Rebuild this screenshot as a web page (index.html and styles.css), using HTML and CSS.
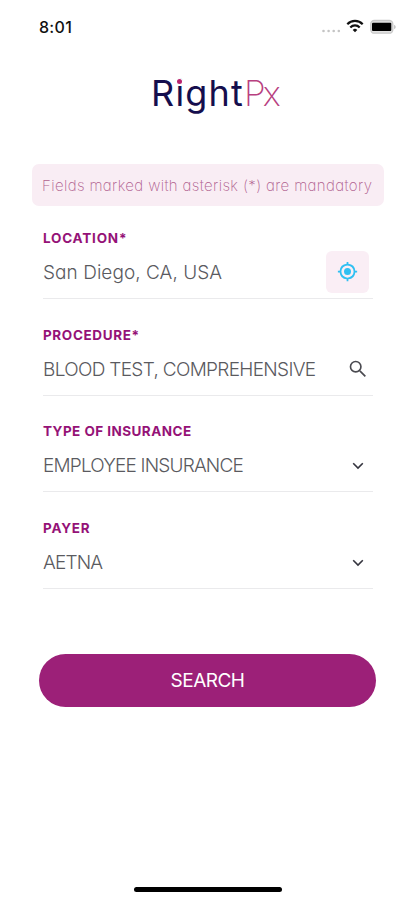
FILE: index.html
```html
<!DOCTYPE html>
<html lang="en">
<head>
<meta charset="utf-8">
<title>RightPx</title>
<link rel="stylesheet" href="styles.css">
</head>
<body>
<main class="screen">
  <header class="status">
    <span class="time">8:01</span>
    <svg class="status-icons" viewBox="0 0 76 20" aria-hidden="true">
      <g fill="#c4c4c4"><circle cx="3.500" cy="14" r="1.300"/><circle cx="8.600" cy="14" r="1.300"/><circle cx="13.700" cy="14" r="1.300"/><circle cx="18.800" cy="14" r="1.300"/></g>
      <g fill="none" stroke="#111" stroke-width="2.200"><path d="M27.300 7.200a10.700 10.700 0 0 1 15.400 0"/><path d="M30.300 10.400a6.600 6.600 0 0 1 9.400 0"/></g>
      <path d="M35 15.300l-2.300-2.400a3.300 3.300 0 0 1 4.600 0z" fill="#111"/>
      <rect x="50.800" y="3.500" width="22" height="12.700" rx="3.500" fill="#e2e2e2" stroke="#c8c8c8" stroke-width="1.300"/>
      <rect x="52" y="5.700" width="19.300" height="8.300" rx="1" fill="#000"/>
      <path d="M74.200 7.700q3 2.200 0 4.500z" fill="#bbb"/>
    </svg>
  </header>
  <h1 class="logo"><span class="right">R<span class="i">i</span>ght</span><span class="px">Px</span></h1>
  <p class="notice">Fields marked with asterisk (*) are mandatory</p>
  <form class="form">
    <div class="field">
      <label class="label">LOCATION*</label>
      <div class="row">
        <span class="value mixed">San Diego, CA, USA</span>
        <span class="locate">
          <svg viewBox="0 0 24 24" width="21" height="21" fill="#2fc0f2" aria-hidden="true"><path d="M12 8a4 4 0 1 0 0 8 4 4 0 0 0 0-8zm8.940 3A8.990 8.990 0 0 0 13 3.060V1h-2v2.060A8.990 8.990 0 0 0 3.060 11H1v2h2.060A8.990 8.990 0 0 0 11 20.940V23h2v-2.060A8.990 8.990 0 0 0 20.940 13H23v-2h-2.060zM12 19a7 7 0 1 1 0-14 7 7 0 0 1 0 14z"/></svg>
        </span>
      </div>
    </div>
    <div class="field">
      <label class="label procedure">PROCEDURE*</label>
      <div class="row">
        <span class="value">BLOOD TEST, COMPREHENSIVE</span>
        <svg class="search-icon" viewBox="0 0 24 24" aria-hidden="true"><circle cx="9.500" cy="9.500" r="5.700"/><path d="M14 14l6 6"/></svg>
      </div>
    </div>
    <div class="field">
      <label class="label type">TYPE OF INSURANCE</label>
      <div class="row">
        <span class="value insurance">EMPLOYEE INSURANCE</span>
        <svg class="chevron" viewBox="0 0 12 8" aria-hidden="true"><path d="M1.200 1.300L6 6.100l4.800-4.800"/></svg>
      </div>
    </div>
    <div class="field">
      <label class="label">PAYER</label>
      <div class="row">
        <span class="value insurance">AETNA</span>
        <svg class="chevron" viewBox="0 0 12 8" aria-hidden="true"><path d="M1.200 1.300L6 6.100l4.800-4.800"/></svg>
      </div>
    </div>
    <button class="search" type="button">SEARCH</button>
  </form>
  <div class="home-bar"></div>
</main>
</body>
</html>
```
FILE: styles.css
```css
* { box-sizing: border-box; }
body { margin: 0; background: #fff; font-family: Inter, "Liberation Sans", sans-serif; font-feature-settings: "cv11"; }
.screen { display: flex; flex-direction: column; width: 415px; height: 900px; overflow: hidden; }
.status { display: flex; justify-content: space-between; padding: 17px 19px 0 39px; height: 70px; }
.time { font-size: 16px; font-weight: 500; line-height: 20px; color: #111; letter-spacing: .3px; }
.status-icons { width: 76px; height: 20px; }
.logo { margin: 0; padding-left: 151px; height: 94px; font-size: 36px; font-weight: 370; line-height: 46px; color: #150e4d; white-space: nowrap; }
.right { letter-spacing: 1.200px; }
.i { position: relative; }
.i::after { content: ""; position: absolute; left: 2px; top: 8px; width: 5px; height: 5px; border-radius: 50%; background: #b9246f; box-shadow: 0 0 0 1px #fff; }
.px { font-size: 35px; font-weight: 200; color: #b8407f; letter-spacing: -3px; }
.notice { margin: 0 31px 0 32px; padding-left: 10px; height: 42px; border-radius: 7px; background: #f9edf4; font-size: 15px; font-weight: 200; line-height: 43px; letter-spacing: .37px; color: #b0608f; white-space: nowrap; }
.form { padding: 22px 39px 0; }
.field { display: flex; flex-direction: column; height: 96.700px; margin: 0 3px 0 4px; }
.label { height: 20px; font-size: 13.500px; font-weight: 700; line-height: 20px; color: #951277; letter-spacing: .78px; }
.label.procedure { letter-spacing: .62px; }
.label.type { letter-spacing: .45px; }
.row { display: flex; justify-content: space-between; align-items: center; height: 51px; border-bottom: 1.500px solid #eaeaec; }
.value { font-size: 19px; font-weight: 300; line-height: 24px; color: #5a5a60; letter-spacing: -.68px; white-space: nowrap; }
.value.mixed { letter-spacing: .05px; }
.value.insurance { letter-spacing: -.82px; }
.locate { display: flex; align-items: center; justify-content: center; width: 43px; height: 42px; margin: 0 4px 3px 0; border-radius: 6px; background: #faeef5; }
.search-icon { width: 22px; height: 22px; margin: 0 4px 2px 0; fill: none; stroke: #4a4a50; stroke-width: 1.800; }
.chevron { width: 12px; height: 8px; margin: 0 9px 1px 0; fill: none; stroke: #35353f; stroke-width: 1.600; }
.search { display: block; width: 337px; height: 53px; margin-top: 39px; padding: 0; border: 0; border-radius: 27px; background: #9c2078; color: #fff; font: 400 19px/53px Inter, sans-serif; letter-spacing: -.5px; }
.home-bar { width: 148px; height: 5px; margin: auto 0 8px 134px; border-radius: 3px; background: #000; }
```
